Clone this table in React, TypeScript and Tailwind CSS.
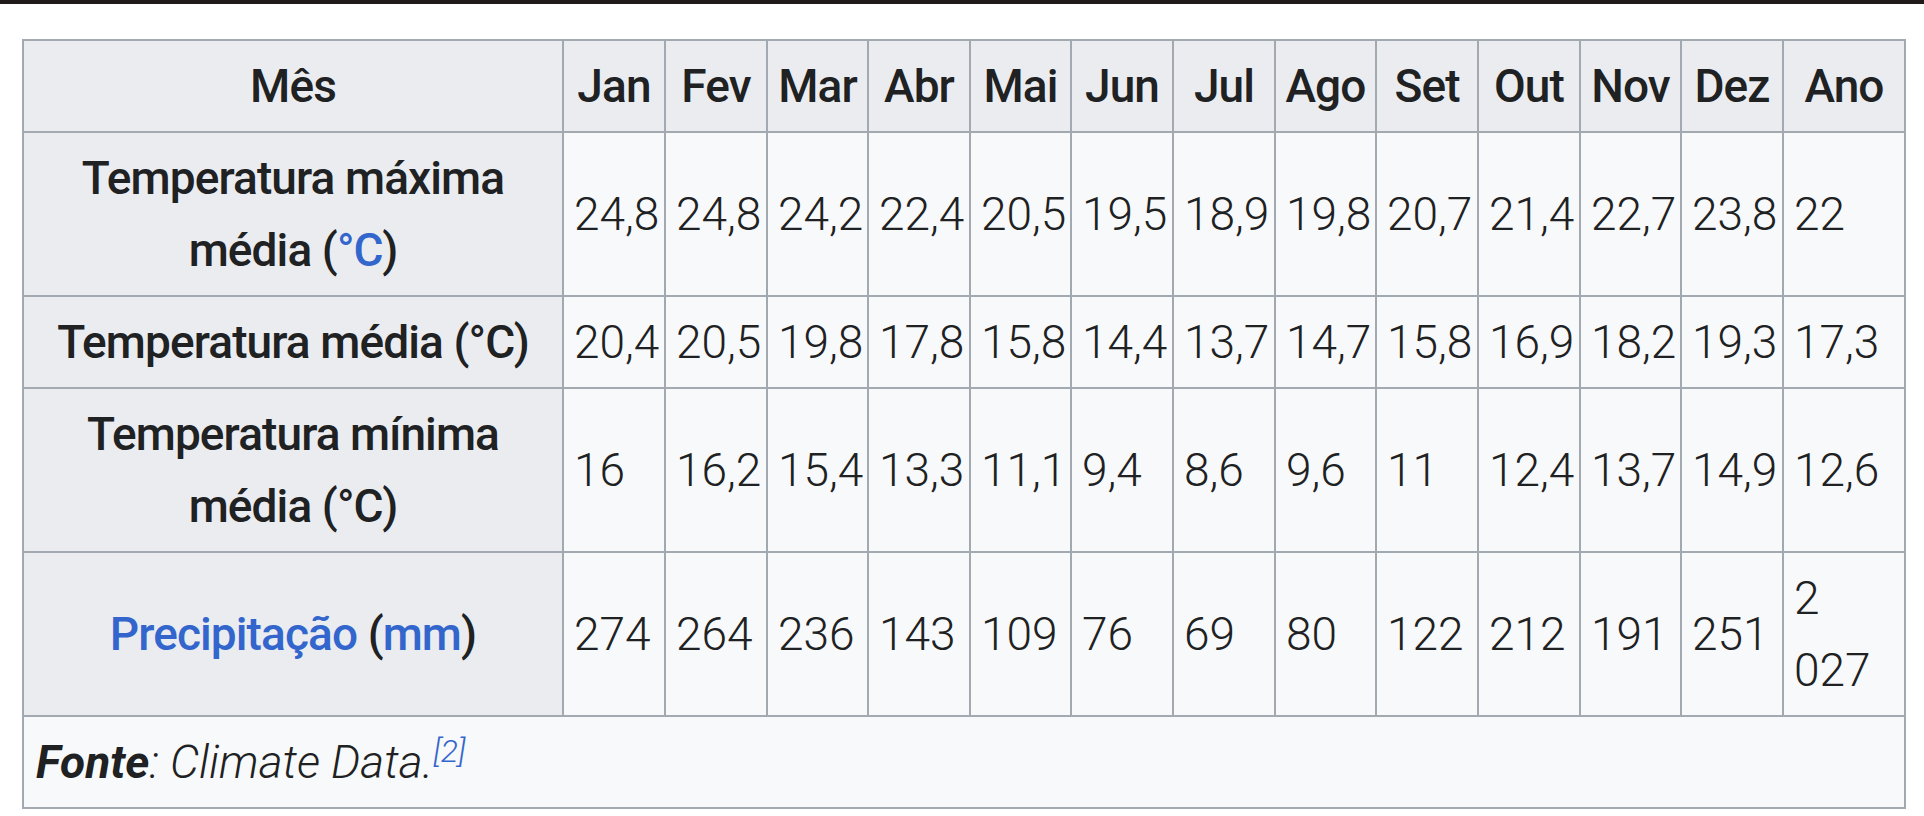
import React from "react";

const months = ["Jan", "Fev", "Mar", "Abr", "Mai", "Jun", "Jul", "Ago", "Set", "Out", "Nov", "Dez", "Ano"];
const colWidths = [102, 102, 101, 102, 101, 102, 102, 101, 102, 102, 101, 102, 122];

const rows: { label: React.ReactNode; values: string[] }[] = [
  {
    label: (
      <>
        Temperatura máxima média (<a className="text-[#3366cc]">°C</a>)
      </>
    ),
    values: ["24,8", "24,8", "24,2", "22,4", "20,5", "19,5", "18,9", "19,8", "20,7", "21,4", "22,7", "23,8", "22"],
  },
  {
    label: <>Temperatura média (°C)</>,
    values: ["20,4", "20,5", "19,8", "17,8", "15,8", "14,4", "13,7", "14,7", "15,8", "16,9", "18,2", "19,3", "17,3"],
  },
  {
    label: <>Temperatura mínima média (°C)</>,
    values: ["16", "16,2", "15,4", "13,3", "11,1", "9,4", "8,6", "9,6", "11", "12,4", "13,7", "14,9", "12,6"],
  },
  {
    label: (
      <>
        <a className="text-[#3366cc]">Precipitação</a> (<a className="text-[#3366cc]">mm</a>)
      </>
    ),
    values: ["274", "264", "236", "143", "109", "76", "69", "80", "122", "212", "191", "251", "2 027"],
  },
];

export default function App() {
  return (
    <div className="min-h-screen bg-white font-['Roboto',sans-serif] text-[#202122]">
      <div className="h-[4px] bg-[#211b1c]" />
      <div className="pl-[22px] pt-[35px]">
        <table className="w-[1882px] table-fixed border-collapse border-2 border-[#a2a9b1] text-[46px] leading-[72px]">
          <colgroup>
            <col className="w-[540px]" />
            {colWidths.map((w, i) => (
              <col key={i} style={{ width: w }} />
            ))}
          </colgroup>
          <thead>
            <tr className="bg-[#eaecf0]">
              <th className="border-2 border-[#a2a9b1] px-[12px] py-[9px] text-center font-medium tracking-[-0.9px]">Mês</th>
              {months.map((m) => (
                <th key={m} className="border-2 border-[#a2a9b1] px-[4px] py-[9px] text-center font-medium tracking-[-0.9px]">
                  {m}
                </th>
              ))}
            </tr>
          </thead>
          <tbody>
            {rows.map((r, i) => (
              <tr key={i}>
                <th className="border-2 border-[#a2a9b1] bg-[#eaecf0] px-[12px] py-[9px] text-center font-medium tracking-[-0.9px]">
                  {r.label}
                </th>
                {r.values.map((v, j) => (
                  <td key={j} className="border-2 border-[#a2a9b1] bg-[#f8f9fa] px-[10px] py-[9px] text-left align-middle font-light">
                    {v}
                  </td>
                ))}
              </tr>
            ))}
            <tr>
              <td colSpan={14} className="border-2 border-[#a2a9b1] bg-[#f8f9fa] px-[12px] py-[9px] text-left italic font-light">
                <b className="font-bold">Fonte</b>: Climate Data.
                <sup className="text-[#3366cc] text-[32px] leading-none">[2]</sup>
              </td>
            </tr>
          </tbody>
        </table>
      </div>
    </div>
  );
}
